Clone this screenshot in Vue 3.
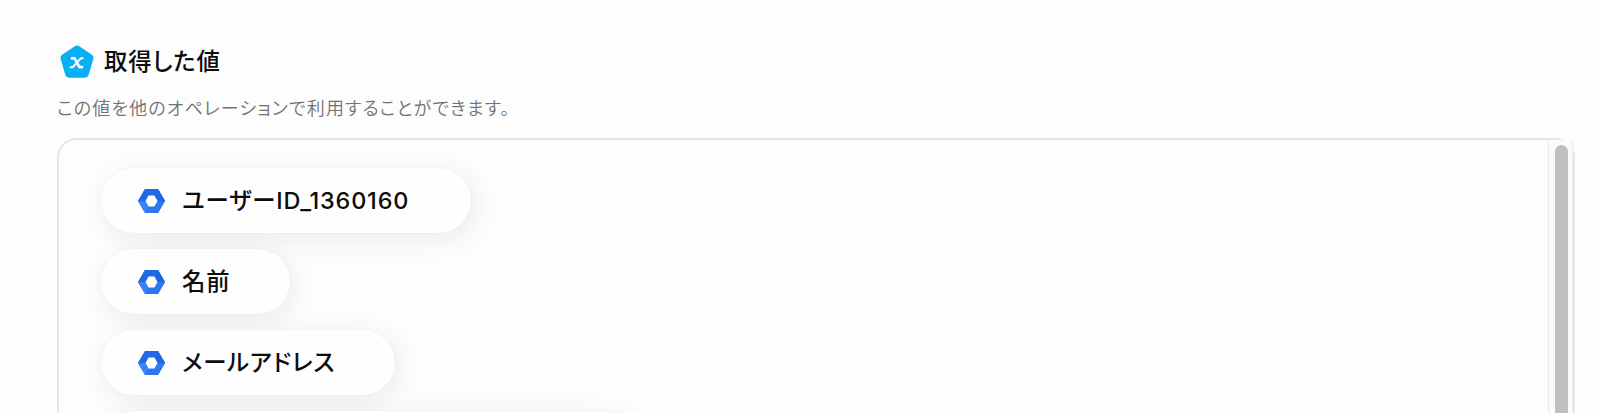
<script setup>
import { ref } from 'vue'

const values = ref([
  { id: 1, label: 'ユーザーID_1360160', size: 'pill-id' },
  { id: 2, label: '名前', size: 'pill-name' },
  { id: 3, label: 'メールアドレス', size: 'pill-mail' },
  { id: 4, label: '', size: 'pill-next' }
])
</script>

<template>
  <div class="page-wrap">
    <header class="heading">
      <svg class="heading-icon" viewBox="0 0 34 34">
        <path
          d="M14.7 1.2Q17 -.2 19.3 1.2L31.5 9.6Q34.2 11.4 33.3 14.2L28.6 30Q27.7 32.8 25 32.8H9Q6.3 32.8 5.4 30L.7 14.2Q-.2 11.4 2.5 9.6Z"
          fill="#08aff4"
        />
        <g fill="none" stroke="#fff" stroke-linecap="round" stroke-linejoin="round">
          <path d="M12 13.4H14.6L19.4 22.1H22" stroke-width="2.7" />
          <path d="M22.6 13.3H20.8L12.8 22.2H10.6" stroke-width="2" />
        </g>
      </svg>
      <h1 class="heading-title">取得した値</h1>
    </header>
    <p class="description">この値を他のオペレーションで利用することができます。</p>

    <section class="value-box">
      <div class="value-list">
        <div v-for="item in values" :key="item.id" class="pill" :class="item.size">
          <svg class="pill-icon" viewBox="0 0 27 24">
            <path d="M7 0H20L27 12L20 24H7L0 12Z" fill="#2c76ee" />
            <path d="M7 0H20L16.5 6.5H10.5L7.5 12H0Z" fill="#2169e2" />
            <path d="M20 0L27 12L20 24L16.5 17.5L19.5 12L16.5 6.5Z" fill="#2f78ee" />
            <path d="M20 0L27 12H19.5L16.5 6.5Z" fill="#1f66de" />
            <path d="M0 12H7.5L10.5 17.5L7 24Z" fill="#3a82f6" />
            <path d="M10.6 6.5H16.4L19.5 12L16.4 17.5H10.6L7.5 12Z" fill="#fff" />
          </svg>
          <span class="pill-label">{{ item.label }}</span>
        </div>
      </div>
      <div class="scroll-track">
        <div class="scroll-thumb"></div>
      </div>
    </section>
  </div>
</template>

<style>
body {
  background: #fdfdfd;
  overflow: hidden;
}
</style>

<style scoped>
.page-wrap {
  box-sizing: border-box;
  height: 413px;
  padding: 45px 25px 0 57px;
  overflow: hidden;
  display: flex;
  flex-direction: column;
  font-family: Inter, 'Noto Sans CJK JP', sans-serif;
  color: #0c0c0e;
}

.heading {
  display: flex;
  align-items: center;
  gap: 10px;
  height: 34px;
  padding-left: 3px;
}

.heading-icon {
  width: 34px;
  height: 34px;
}

.heading-title {
  margin: 0;
  font-size: 23.4px;
  line-height: 34px;
  font-weight: 500;
  font-feature-settings: 'palt';
  letter-spacing: 0.9px;
}

.description {
  margin: 16px 0 0;
  height: 27px;
  font-size: 18px;
  line-height: 28px;
  font-weight: 350;
  font-feature-settings: 'palt';
  letter-spacing: 1.15px;
  color: #717174;
  white-space: nowrap;
}

.value-box {
  box-sizing: border-box;
  flex-shrink: 0;
  height: 320px;
  margin-top: 16px;
  border: 2px solid #e6e6e8;
  border-radius: 20px;
  display: flex;
  justify-content: space-between;
}

.value-list {
  display: flex;
  flex-direction: column;
  align-items: flex-start;
  gap: 16px;
  padding: 28px 0 0 42px;
}

.pill {
  box-sizing: border-box;
  flex-shrink: 0;
  height: 65px;
  padding-left: 37px;
  display: flex;
  align-items: center;
  gap: 17px;
  border-radius: 33px;
  background: #fefefe;
  box-shadow: 4px 6px 28px rgba(45, 20, 50, 0.08), 0 0 2px rgba(35, 20, 45, 0.06);
}

.pill-id {
  width: 370px;
}

.pill-name {
  width: 189px;
}

.pill-mail {
  width: 294px;
}

.pill-next {
  width: 530px;
}

.pill-icon {
  width: 27px;
  height: 24px;
}

.pill-label {
  margin-top: 1px;
  font-size: 23.4px;
  line-height: 34px;
  font-weight: 500;
  font-feature-settings: 'palt';
  letter-spacing: 0.85px;
  white-space: nowrap;
}

.scroll-track {
  box-sizing: border-box;
  width: 25px;
  padding: 5px 5px 0 6px;
  border-left: 1px solid #e9e9eb;
  border-right: 1px solid #ededef;
  background: #fbfbfb;
}

.scroll-thumb {
  width: 13px;
  height: 320px;
  border-radius: 7px;
  background: #c0bfc1;
}
</style>
